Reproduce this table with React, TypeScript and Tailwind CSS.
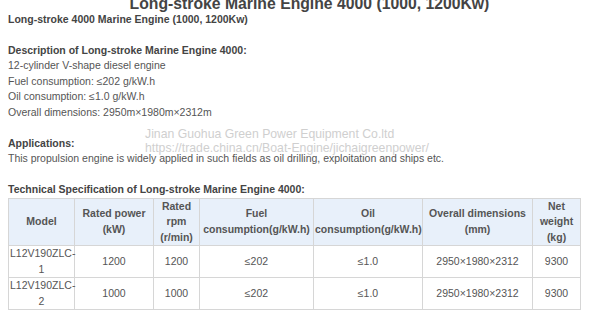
import React from "react";

const rows = [
  { model: "L12V190ZLC-", n: "1", power: "1200", rpm: "1200" },
  { model: "L12V190ZLC-", n: "2", power: "1000", rpm: "1000" },
];

export default function App() {
  const td = "border border-[#d6d6d6] text-center align-middle px-[1px] py-0";
  const th = "border border-[#d6d6d6] text-center align-middle px-[1px] py-0 font-bold bg-[#e8f0fa]";
  return (
    <div
      className="relative w-[600px] h-[318px] overflow-hidden bg-white text-[#555] text-[10.5px] leading-[15.5px]"
      style={{ fontFamily: '"Liberation Sans", Arial, sans-serif' }}
    >
      <div className="-mt-[6px] h-[17.5px] pl-[19px] text-center text-[15.75px] leading-[20px] font-bold text-[#444]">
        Long-stroke Marine Engine 4000 (1000, 1200Kw)
      </div>
      <div className="px-[8px]">
        <div className="font-bold text-[#444]">Long-stroke 4000 Marine Engine (1000, 1200Kw)</div>
        <div className="h-[15.5px]" />
        <div className="font-bold text-[#444]">Description of Long-stroke Marine Engine 4000:</div>
        <div>12-cylinder V-shape diesel engine</div>
        <div>Fuel consumption: ≤202 g/kW.h</div>
        <div>Oil consumption: ≤1.0 g/kW.h</div>
        <div>Overall dimensions: 2950m×1980m×2312m</div>
        <div className="h-[15.5px]" />
        <div className="font-bold text-[#444]">Applications:</div>
        <div>This propulsion engine is widely applied in such fields as oil drilling, exploitation and ships etc.</div>
        <div className="h-[15.5px]" />
        <div className="font-bold text-[#444]">Technical Specification of Long-stroke Marine Engine 4000:</div>
        <table className="table-fixed border-collapse w-[572px]">
          <colgroup>
            <col className="w-[66px]" />
            <col className="w-[79px]" />
            <col className="w-[46px]" />
            <col className="w-[114px]" />
            <col className="w-[109px]" />
            <col className="w-[110px]" />
            <col className="w-[48px]" />
          </colgroup>
          <thead>
            <tr className="h-[47px]">
              <th className={th}>Model</th>
              <th className={th}>Rated power<br />(kW)</th>
              <th className={th}>Rated<br />rpm<br />(r/min)</th>
              <th className={th}>Fuel<br />consumption(g/kW.h)</th>
              <th className={th}>Oil<br />consumption(g/kW.h)</th>
              <th className={th}>Overall dimensions<br />(mm)</th>
              <th className={th}>Net<br />weight<br />(kg)</th>
            </tr>
          </thead>
          <tbody>
            {rows.map((r, i) => (
              <tr key={i} className="h-[31.5px]">
                <td className={td}>{r.model}<br />{r.n}</td>
                <td className={td}>{r.power}</td>
                <td className={td}>{r.rpm}</td>
                <td className={td}>≤202</td>
                <td className={td}>≤1.0</td>
                <td className={td}>2950×1980×2312</td>
                <td className={td}>9300</td>
              </tr>
            ))}
          </tbody>
        </table>
      </div>
      <div className="absolute left-[145px] top-[127px] text-[12.25px] leading-[14px] text-[#cfcfcf] pointer-events-none">
        <div>Jinan Guohua Green Power Equipment Co.ltd</div>
        <div>https://trade.china.cn/Boat-Engine/jichaigreenpower/</div>
      </div>
    </div>
  );
}
